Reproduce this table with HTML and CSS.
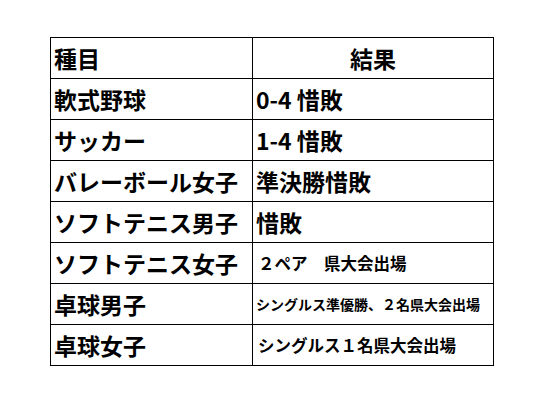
FILE: index.html
```html
<!DOCTYPE html>
<html lang="ja">
<head>
<meta charset="utf-8">
<link rel="stylesheet" href="styles.css">
</head>
<body>
<table class="results">
  <colgroup><col class="c-event"><col class="c-result"></colgroup>
  <tr><td>種目</td><td class="center">結果</td></tr>
  <tr><td>軟式野球</td><td>0-4 惜敗</td></tr>
  <tr><td>サッカー</td><td>1-4 惜敗</td></tr>
  <tr><td>バレーボール女子</td><td>準決勝惜敗</td></tr>
  <tr><td>ソフトテニス男子</td><td>惜敗</td></tr>
  <tr><td>ソフトテニス女子</td><td class="mid">２ペア　県大会出場</td></tr>
  <tr><td>卓球男子</td><td class="small">シングルス準優勝、２名県大会出場</td></tr>
  <tr><td>卓球女子</td><td class="mid">シングルス１名県大会出場</td></tr>
</table>
</body>
</html>
```

FILE: styles.css
```css
html, body {
  margin: 0;
  padding: 0;
  background: #ffffff;
}
body {
  padding: 37px 0 0 50px;
  font-family: "Noto Sans CJK JP", "Noto Sans", sans-serif;
  color: #000;
}
.results {
  border-collapse: collapse;
  table-layout: fixed;
  width: 443px;
}
.c-event { width: 202px; }
.c-result { width: 241px; }
.results tr { height: 41px; }
.results td {
  border: 1.3px solid #000;
  padding: 0 0 0 3px;
  font-size: 23px;
  font-weight: 700;
  line-height: 1;
  white-space: nowrap;
  vertical-align: middle;
}
.results td.center { text-align: center; padding-left: 0; }
.results td.mid { font-size: 16.5px; padding-left: 5px; }
.results td.small { font-size: 14px; padding-left: 3px; }
```
